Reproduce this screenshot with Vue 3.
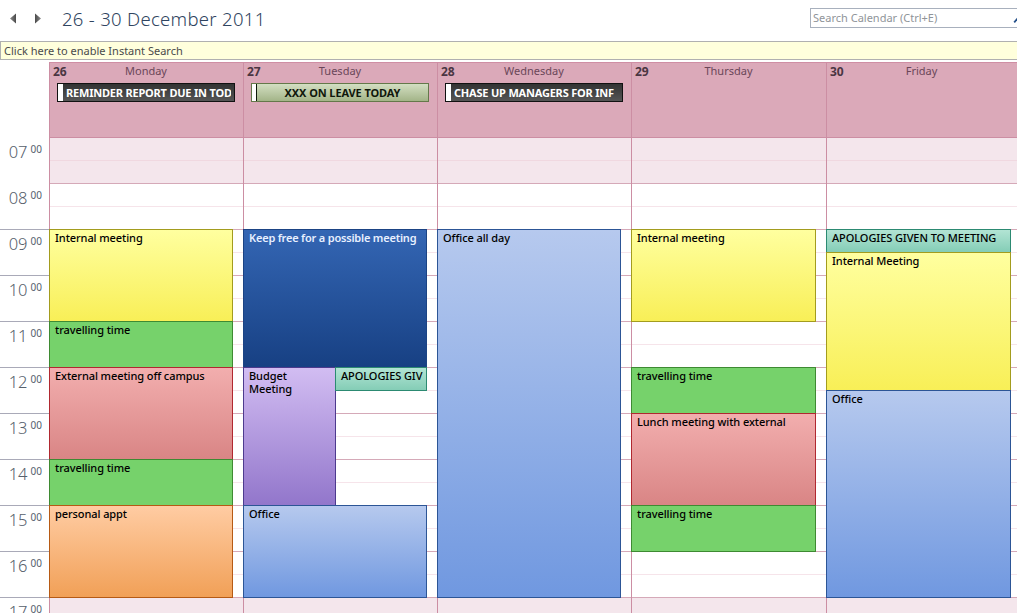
<template>
  <div class="page">
    <div class="toolbar">
      <div class="nav">
        <svg width="8" height="11" viewBox="0 0 8 11"><path d="M7 0.5V10.5L1 5.5Z" fill="url(#arrowL)" /></svg>
        <svg width="8" height="11" viewBox="0 0 8 11"><path d="M1 0.5V10.5L7 5.5Z" fill="url(#arrowR)" /></svg>
        <svg width="0" height="0" class="defs">
          <defs>
            <linearGradient id="arrowL" x1="1" y1="0" x2="0" y2="0">
              <stop offset="0" stop-color="#4a4a4a" />
              <stop offset="1" stop-color="#8a8a8a" />
            </linearGradient>
            <linearGradient id="arrowR" x1="0" y1="0" x2="1" y2="0">
              <stop offset="0" stop-color="#4a4a4a" />
              <stop offset="1" stop-color="#8a8a8a" />
            </linearGradient>
          </defs>
        </svg>
      </div>
      <h1 class="range">26 - 30 December 2011</h1>
      <div class="search">
        <span>Search Calendar (Ctrl+E)</span>
        <svg class="lens" width="10" height="12" viewBox="0 0 10 12">
          <circle cx="9" cy="3.5" r="3" fill="none" stroke="#6d9ad0" stroke-width="1.2" />
          <path d="M6.6 5.4L2.2 10.4" stroke="#24508a" stroke-width="1.8" />
        </svg>
      </div>
    </div>
    <div class="notice">Click here to enable Instant Search</div>

    <div class="calendar">
      <div class="head">
        <div class="corner"></div>
        <div v-for="d in days" :key="d.num" class="day-head" :style="{ width: d.width + 'px' }">
          <div class="day-title">
            <strong>{{ d.num }}</strong>
            <span>{{ d.name }}</span>
          </div>
          <div v-if="d.banner" class="banner" :class="d.banner.kind">
            <i></i>
            <b>{{ d.banner.text }}</b>
          </div>
        </div>
      </div>

      <div class="body">
        <div class="times">
          <div v-for="h in hours" :key="h" class="hour" :class="{ lined: h >= 9 }">
            <span class="big">{{ String(h).padStart(2, '0') }}</span><span class="small">00</span>
          </div>
        </div>
        <div v-for="d in days" :key="d.num" class="column" :style="{ width: d.width + 'px' }">
          <div
            v-for="s in slots"
            :key="s.key"
            class="slot"
            :class="{ off: s.off, half: s.half }"
          ></div>
          <div
            v-for="e in d.events"
            :key="e.text + e.from"
            class="event"
            :class="e.kind"
            :style="eventStyle(e)"
          >{{ e.text }}</div>
        </div>
      </div>
    </div>
  </div>
</template>

<script setup>
const SLOT = 23
const hours = [7, 8, 9, 10, 11, 12, 13, 14, 15, 16, 17]

// half hour rows, 7:00 onwards
const slots = []
for (let i = 0; i < 22; i++) {
  const h = 7 + Math.floor(i / 2)
  slots.push({ key: i, half: i % 2 === 0, off: h < 8 || h >= 17 })
}

const days = [
  {
    num: 26, name: 'Monday', width: 194,
    banner: { kind: 'dark', text: 'REMINDER REPORT DUE IN TOD' },
    events: [
      { text: 'Internal meeting', kind: 'yellow', from: 4, to: 8 },
      { text: 'travelling time', kind: 'green', from: 8, to: 10 },
      { text: 'External meeting off campus', kind: 'red', from: 10, to: 14 },
      { text: 'travelling time', kind: 'green', from: 14, to: 16 },
      { text: 'personal appt', kind: 'orange', from: 16, to: 20 },
    ],
  },
  {
    num: 27, name: 'Tuesday', width: 194,
    banner: { kind: 'olive', text: 'XXX ON LEAVE TODAY' },
    events: [
      { text: 'Keep free for a possible meeting', kind: 'navy', from: 4, to: 10 },
      { text: 'Budget Meeting', kind: 'purple', from: 10, to: 16, w: 93 },
      { text: 'APOLOGIES GIV', kind: 'teal', from: 10, to: 11, left: 92, w: 92 },
      { text: 'Office', kind: 'blue', from: 16, to: 20 },
    ],
  },
  {
    num: 28, name: 'Wednesday', width: 194,
    banner: { kind: 'dark', text: 'CHASE UP MANAGERS FOR INF' },
    events: [{ text: 'Office all day', kind: 'blue', from: 4, to: 20 }],
  },
  {
    num: 29, name: 'Thursday', width: 195,
    events: [
      { text: 'Internal meeting', kind: 'yellow', from: 4, to: 8, w: 185 },
      { text: 'travelling time', kind: 'green', from: 10, to: 12, w: 185 },
      { text: 'Lunch meeting with external', kind: 'red', from: 12, to: 16, w: 185 },
      { text: 'travelling time', kind: 'green', from: 16, to: 18, w: 185 },
    ],
  },
  {
    num: 30, name: 'Friday', width: 191,
    events: [
      { text: 'APOLOGIES GIVEN TO MEETING', kind: 'teal', from: 4, to: 5, w: 185 },
      { text: 'Internal Meeting', kind: 'yellow', from: 5, to: 11, w: 185 },
      { text: 'Office', kind: 'blue', from: 11, to: 20, w: 185 },
    ],
  },
]

const eventStyle = (e) => ({
  top: e.from * SLOT - 1 + 'px',
  height: (e.to - e.from) * SLOT + 1 + 'px',
  left: (e.left || 0) + 'px',
  width: (e.w || 184) + 'px',
})
</script>

<style>
html, body {
  margin: 0;
  overflow: hidden;
  background: #fff;
}
</style>

<style scoped>
.page {
  width: 1017px;
  height: 613px;
  overflow: hidden;
  font-family: "Noto Sans", "Open Sans", sans-serif;
  font-size: 11px;
  color: #000;
  background: #fff;
}
.toolbar {
  display: flex;
  align-items: center;
  height: 41px;
  box-sizing: border-box;
  padding-left: 9px;
}
.nav {
  display: flex;
  gap: 17px;
  width: 53px;
  margin-top: -5px;
}
.defs {
  position: absolute;
}
.range {
  margin: 0;
  margin-top: -5px;
  font-size: 18.5px;
  font-weight: 300;
  color: #2f4460;
  letter-spacing: 0.3px;
}
.search {
  position: relative;
  margin-left: auto;
  margin-top: -5px;
  width: 207px;
  height: 20px;
  box-sizing: border-box;
  border: 1px solid #a8b0bd;
  border-right: none;
  color: #8f9499;
  line-height: 18px;
  padding-left: 2px;
}
.lens {
  position: absolute;
  right: -5px;
  top: 3px;
}
.notice {
  height: 19px;
  box-sizing: border-box;
  background: #ffffdc;
  border: 1px solid #b0b0b0;
  border-right: none;
  color: #4a4a4a;
  line-height: 17px;
  padding-left: 3px;
}
.calendar {
  margin-top: 2px;
}
.head {
  display: flex;
  height: 76px;
}
.corner {
  width: 49px;
  flex: none;
}
.day-head {
  flex: none;
  box-sizing: border-box;
  background: #dba9b9;
  border-top: 1px solid #cf8ea4;
  border-left: 1px solid #cc8ea3;
  border-bottom: 1px solid #cc8ea3;
}
.day-title {
  display: flex;
  height: 20px;
  padding-left: 3px;
  color: #6a4658;
}
.day-title strong {
  width: 16px;
  font-size: 12px;
  line-height: 18px;
  color: #4a3642;
}
.day-title span {
  flex: 1;
  line-height: 15px;
  text-align: center;
  padding-right: 20px;
}
.banner {
  display: flex;
  width: 178px;
  height: 19px;
  box-sizing: border-box;
  margin-left: 7px;
  border: 1px solid;
  font-size: 11px;
  line-height: 17px;
  letter-spacing: -0.1px;
  overflow: hidden;
}
.banner i {
  flex: none;
  width: 4px;
  background: #fff;
  border-right: 1px solid;
}
.banner b {
  flex: 1;
  min-width: 0;
  white-space: nowrap;
  overflow: hidden;
  text-align: center;
}
.banner.dark b {
  text-align: left;
  padding-left: 3px;
  margin-right: 3px;
  letter-spacing: -0.2px;
}
.banner.dark {
  border-color: #111;
  background: linear-gradient(#333, #555);
  color: #fff;
}
.banner.olive {
  border-color: #64784a;
  background: linear-gradient(#d3dfc2, #a3b488);
  color: #10180c;
}
.body {
  display: flex;
}
.times {
  width: 49px;
  flex: none;
  margin-top: -1px;
}
.hour {
  height: 46px;
  box-sizing: border-box;
  padding-top: 4px;
  padding-right: 7px;
  text-align: right;
  color: #56606c;
  line-height: 20px;
  border-top: 1px solid transparent;
}
.hour.lined {
  border-top-color: #a9aab8;
}
.big {
  font-size: 16.5px;
  font-weight: 300;
}
.small {
  position: relative;
  top: -5px;
  margin-left: 3px;
  font-size: 10px;
}
.column {
  flex: none;
  position: relative;
  box-sizing: border-box;
  border-left: 1px solid #cc8ea3;
}
.slot {
  height: 23px;
  box-sizing: border-box;
  background: #fff;
  border-bottom: 1px solid #d5a9b8;
}
.slot.half {
  border-bottom-color: #f6e4ea;
}
.slot.off {
  background: #f4e6ec;
}
.slot.off.half {
  border-bottom-color: #f0d8e0;
}
.event {
  position: absolute;
  margin-left: -1px;
  box-sizing: border-box;
  border: 1px solid;
  padding: 1px 5px;
  line-height: 13px;
  overflow: hidden;
  color: #000;
  font-weight: 500;
  letter-spacing: -0.08px;
}
.yellow {
  border-color: #a39c1e;
  background: linear-gradient(#ffff9f, #f8ef57);
}
.green {
  border-color: #3e8a32;
  background: #76d26b;
}
.red {
  border-color: #b02830;
  background: linear-gradient(#f2aeae, #d98585);
}
.orange {
  border-color: #b65a14;
  background: linear-gradient(#ffcca3, #f1a057);
}
.navy {
  border-color: #1b4384;
  background: linear-gradient(#3466b4, #174083);
  color: #e8f0ff;
  font-weight: 600;
  letter-spacing: -0.2px;
  white-space: nowrap;
}
.purple {
  border-color: #4d3a8e;
  background: linear-gradient(#d2bdf2, #9276cb);
}
.teal {
  border-color: #2c8a72;
  background: linear-gradient(#b2e4d4, #84cdb6);
  white-space: nowrap;
}
.blue {
  border-color: #2c5596;
  background: linear-gradient(#b6c9ee, #7098e0);
}
</style>
